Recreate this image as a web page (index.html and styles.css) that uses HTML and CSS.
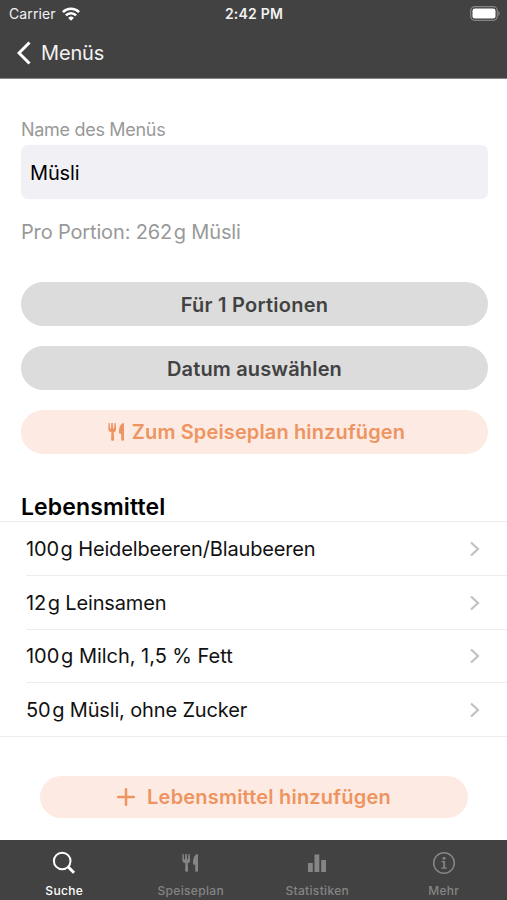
FILE: index.html
```html
<!DOCTYPE html>
<html lang="de">
<head>
<meta charset="utf-8">
<title>Menüs</title>
<link rel="stylesheet" href="styles.css">
</head>
<body>
<svg class="defs" width="0" height="0" aria-hidden="true">
  <symbol id="cutlery" viewBox="0 0 16 18">
    <path d="M0 0h1.200l.4 5.600h.9L2.800 0h1.500l.3 5.600h.9L5.900 0h1.300l.4 6.400c0 1.600-.9 2.300-2.300 2.800l.3 7.600c0 1.300-3 1.300-3 0l.3-7.600C.8 8.700-.2 8-.1 6.400z"/>
    <path d="M15.500.7v16c0 1.400-2.800 1.400-2.800 0v-5.800l-2.200-.6C10.300 5 11.600 0 15.500 0z"/>
  </symbol>
</svg>
<div class="app">
  <header class="header">
    <div class="status">
      <div class="carrier"><span>Carrier</span>
        <svg width="18" height="14" viewBox="0 0 18 14" fill="none" stroke="#fff" stroke-width="2.600"><path d="M.9 5.100a11.500 11.500 0 0 1 16.200 0M3.900 8.400a7.200 7.200 0 0 1 10.200 0"/><path d="M9 13.700 6.200 10.900a4 4 0 0 1 5.600 0z" fill="#fff" stroke="none"/></svg>
      </div>
      <div class="time">2:42 PM</div>
      <svg class="battery" width="30" height="15" viewBox="0 0 30 15"><rect x=".7" y=".7" width="26.600" height="13.600" rx="4" fill="none" stroke="#858585" stroke-width="1.200"/><rect x="2.500" y="2.500" width="23" height="10" rx="2.300" fill="#fff"/><path d="M28.300 5v5c1.900-.7 1.900-4.300 0-5z" fill="#858585"/></svg>
    </div>
    <nav class="nav">
      <svg width="14" height="24" viewBox="0 0 14 24" fill="none" stroke="#fff" stroke-width="3"><path d="M12.500 1.500 2 12l10.500 10.500"/></svg>
      <span>Menüs</span>
    </nav>
  </header>
  <main class="main">
    <section class="form">
      <label class="label" for="name">Name des Menüs</label>
      <div class="field" id="name"><span>Müsli</span></div>
      <p class="portion">Pro Portion: 262&#8202;g Müsli</p>
      <div class="buttons">
        <div class="btn"><span class="t-portions">Für 1 Portionen</span></div>
        <div class="btn"><span class="t-date">Datum auswählen</span></div>
        <div class="btn accent plan"><svg width="17" height="18"><use href="#cutlery"/></svg><span>Zum Speiseplan hinzufügen</span></div>
      </div>
      <h2 class="title"><span>Lebensmittel</span></h2>
    </section>
    <ul class="list">
      <li><span>100&#8202;g Heidelbeeren/Blaubeeren</span><svg class="chev" viewBox="0 0 10 16"><path d="M1 1.500 8 8l-7 6.500"/></svg></li>
      <li><span>12&#8202;g Leinsamen</span><svg class="chev" viewBox="0 0 10 16"><path d="M1 1.500 8 8l-7 6.500"/></svg></li>
      <li><span class="t-milk">100&#8202;g Milch, 1,5 % Fett</span><svg class="chev" viewBox="0 0 10 16"><path d="M1 1.500 8 8l-7 6.500"/></svg></li>
      <li><span>50&#8202;g Müsli, ohne Zucker</span><svg class="chev" viewBox="0 0 10 16"><path d="M1 1.500 8 8l-7 6.500"/></svg></li>
    </ul>
    <div class="btn accent add"><svg width="18" height="18" viewBox="0 0 18 18" stroke="#ee9461" stroke-width="2.500" stroke-linecap="round"><path d="M9 1.200v15.600M1.200 9h15.600"/></svg><span>Lebensmittel hinzufügen</span></div>
  </main>
  <footer class="tabs">
    <div class="tab active"><svg width="24" height="24" viewBox="0 0 24 24" fill="none" stroke="#fff"><circle cx="10.200" cy="10" r="8.300" stroke-width="2"/><path d="m16 15.800 6 6" stroke-width="3"/></svg><span>Suche</span></div>
    <div class="tab"><svg width="17" height="24" viewBox="0 -3 17 24"><use href="#cutlery" width="17" height="18"/></svg><span>Speiseplan</span></div>
    <div class="tab"><svg width="18" height="24" viewBox="0 0 18 24"><path d="M0 12h4.800v9H0zM6.500 3.500h4.800V21H6.500zM13.200 9H18v12h-4.800z"/></svg><span>Statistiken</span></div>
    <div class="tab"><svg width="24" height="24" viewBox="0 0 24 24"><circle cx="12" cy="12" r="10.300" fill="none" stroke="#858585" stroke-width="1.500"/><circle cx="12" cy="7.300" r="1.500"/><path d="M9.500 10h3.600v6.500h1.800v1.300H9.300v-1.300h2v-5.200H9.500z"/></svg><span>Mehr</span></div>
  </footer>
</div>
</body>
</html>
```
FILE: styles.css
```css
* { box-sizing: border-box; }
body { margin: 0; font-family: Inter, "Liberation Sans", sans-serif; background: #fff; color: #111; }
.defs { display: block; }
.app { width: 507px; height: 900px; display: flex; flex-direction: column; overflow: hidden; }
.header { height: 79px; background: #424242; border-bottom: 1px solid #858585; color: #f2f2f2; flex: none; }
.status { height: 27px; display: grid; grid-template-columns: 1fr auto 1fr; align-items: center; padding: 0 7px 0 9px; font-size: 14px; }
.carrier { display: flex; align-items: center; gap: 6px; letter-spacing: .1px; }
.time { font-weight: 600; letter-spacing: .2px; margin-right: 1px; }
.battery { justify-self: end; }
.nav { height: 50px; display: flex; align-items: center; gap: 10px; padding: 1px 0 0 17px; font-size: 20px; letter-spacing: -.15px; }
.main { flex: 1; }
.form { padding: 40px 19px 0 21px; }
.label { display: block; height: 26px; line-height: 21px; font-size: 18px; color: #999; letter-spacing: -.3px; }
.field { height: 54px; border-radius: 7px; background: #f1f0f5; padding-left: 9px; line-height: 56px; font-size: 20px; letter-spacing: -.15px; color: #000; }
.portion { margin: 20px 0 0; font-size: 20px; line-height: 26px; color: #999; letter-spacing: -.15px; }
.buttons { display: grid; gap: 20px; margin-top: 37px; }
.btn { height: 44px; padding-top: 1px; border-radius: 22px; background: #dcdcdc; color: #424242; display: flex; align-items: center; justify-content: center; font-size: 20px; font-weight: 600; letter-spacing: .2px; }
.accent { padding-top: 0; background: #fdebe3; color: #ee9461; fill: #ee9461; }
.t-portions { letter-spacing: .25px; }
.t-date { letter-spacing: .15px; }
.plan { gap: 7px; padding-left: 4px; letter-spacing: .13px; }
.title { margin: 40px 0 0; height: 27px; line-height: 27px; font-size: 23px; font-weight: 600; letter-spacing: .12px; color: #000; }
.list { list-style: none; margin: 0; padding: 0 0 0 26px; border-top: 1px solid #ececec; border-bottom: 1px solid #ececec; font-size: 20px; letter-spacing: -.15px; }
.list li { height: 54px; display: flex; align-items: center; justify-content: space-between; padding-right: 27px; }
.list li:first-child { height: 53px; padding-bottom: 0; }
.list li:nth-child(3) { height: 53px; }
.list li + li { border-top: 1px solid #ececec; }
.t-milk { letter-spacing: -.03px; }
.chev { width: 10px; height: 16px; fill: none; stroke: #c1c1c1; stroke-width: 2.200; }
.add { margin: 39px 39px 0 40px; height: 42px; gap: 12px; }
.tabs { height: 60px; flex: none; background: #424242; display: grid; grid-template-columns: repeat(4, 1fr); color: #858585; fill: #858585; font-size: 12px; font-weight: 500; letter-spacing: .33px; padding-left: 1px; }
.tab { display: flex; flex-direction: column; align-items: center; padding-top: 11px; gap: 8px; }
.tab span { line-height: 16px; }
.active { color: #fff; }
```
